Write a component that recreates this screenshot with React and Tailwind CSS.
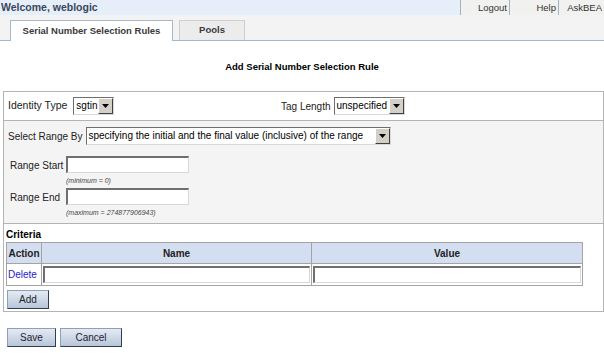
import React from 'react';

const inset =
  'border border-t-[#6f6f6f] border-l-[#6f6f6f] border-b-[#d8d8d8] border-r-[#d8d8d8] bg-white';

const Select = ({ value, width }) => (
  <div className={`flex h-[18px] items-stretch ${inset} ${width}`}>
    <span className="flex-1 overflow-hidden whitespace-nowrap px-[2px] text-[10px] leading-[16px] text-black">{value}</span>
    <span className="flex w-[15px] shrink-0 items-center justify-center border border-t-white border-l-white border-b-[#404040] border-r-[#404040] bg-[#d4d0c8]">
      <svg width="7" height="4" viewBox="0 0 7 4">
        <path d="M0 0h7L3.5 4z" fill="#000" />
      </svg>
    </span>
  </div>
);

const TextBox = ({ width }) => (
  <input type="text" className={`block h-[17px] ${inset} border-t-2 border-l-2 outline-none ${width}`} />
);

const Btn = ({ label, width }) => (
  <button className={`h-[19px] ${width} border border-t-[#8ea0b8] border-l-[#8ea0b8] border-b-[#2e3e56] border-r-[#2e3e56] bg-gradient-to-b from-[#e4eaf3] to-[#b9c6d9] text-[10px] leading-[17px] text-[#1c2433]`}>
    {label}
  </button>
);

export default function App() {
  return (
    <div className="h-[353px] w-[604px] overflow-hidden bg-white font-['Liberation_Sans',Arial,sans-serif] text-[#222]">
      {/* top bar */}
      <div className="flex h-[15px] bg-[#e6eefa]">
        <div className="flex-1 pl-[1px] text-[10.5px] font-bold leading-[15px] text-[#3a475a]">Welcome, weblogic</div>
        {['Logout', 'Help', 'AskBEA'].map((l, i) => (
          <div
            key={l}
            className={`border-l border-[#a3b3c6] bg-[#f1f1ef] pr-[2px] text-right text-[9.5px] leading-[15px] text-[#333] ${i === 2 ? 'w-[46px]' : 'w-[49px]'}`}
          >
            {l}
          </div>
        ))}
      </div>

      {/* tabs */}
      <div className="flex h-[26px] items-end gap-[6px] border-b border-[#a6b8cc] bg-[#f3f3f3] pl-[10px]">
        <div className="-mb-px flex h-[21px] w-[163px] items-center justify-center border border-b-0 border-[#a6b8cc] bg-white text-[9.5px] font-bold text-[#3a3a3a]">
          Serial Number Selection Rules
        </div>
        <div className="flex h-[20px] w-[66px] items-center justify-center border border-b-0 border-[#cfcfcf] bg-[#ececec] text-[9.5px] font-bold text-[#3a3a3a]">
          Pools
        </div>
      </div>

      <div className="pt-[20px] text-center text-[9.5px] font-bold leading-[12px] text-black">
        Add Serial Number Selection Rule
      </div>

      {/* form box */}
      <div className="ml-[3px] mt-[18px] w-[601px] border border-[#b4b4b4]">
        <div className="flex h-[29px] items-center border-b border-[#b4b4b4] pl-[4px] text-[10px]">
          <div className="flex w-[273px] items-center gap-[6px]">
            <span className="text-[10.5px]">Identity Type</span>
            <Select value="sgtin" width="w-[41px]" />
          </div>
          <div className="flex items-center gap-[3px]">
            <span>Tag Length</span>
            <Select value="unspecified" width="w-[71px]" />
          </div>
        </div>

        <div className="h-[103px] border-b border-[#b4b4b4] bg-[#f4f4f4] pl-[4px] pt-[6px] text-[10px]">
          <div className="flex items-center gap-[3px]">
            <span className="whitespace-nowrap">Select Range By</span>
            <Select value="specifying the initial and the final value (inclusive) of the range" width="w-[305px]" />
          </div>
          <div className="mt-[11px] flex pl-[2px]">
            <span className="w-[56px] whitespace-nowrap pt-[2px]">Range Start</span>
            <div>
              <TextBox width="w-[123px]" />
              <div className="mt-[3px] text-[7px] italic leading-[9px] text-[#444]">(minimum = 0)</div>
            </div>
          </div>
          <div className="mt-[3px] flex pl-[2px]">
            <span className="w-[56px] whitespace-nowrap pt-[2px]">Range End</span>
            <div>
              <TextBox width="w-[123px]" />
              <div className="mt-[3px] text-[7px] italic leading-[9px] text-[#444]">(maximum = 274877906943)</div>
            </div>
          </div>
        </div>

        <div className="h-[87px] pl-[2px] pt-[4px]">
          <div className="text-[10px] font-bold leading-[13px] text-black">Criteria</div>
          <table className="mt-[1px] w-[577px] border-collapse text-[10px]">
            <thead>
              <tr className="h-[21px] bg-[#d3def0]">
                <th className="w-[35px] border border-[#a4a4a4] font-bold">Action</th>
                <th className="w-[270px] border border-[#a4a4a4] font-bold">Name</th>
                <th className="border border-[#a4a4a4] font-bold">Value</th>
              </tr>
            </thead>
            <tbody>
              <tr className="h-[22px]">
                <td className="border border-[#a4a4a4] px-[1px] text-[10px] text-[#2424c8]">Delete</td>
                <td className="border border-[#a4a4a4] px-[1px]">
                  <TextBox width="w-full" />
                </td>
                <td className="border border-[#a4a4a4] px-[1px]">
                  <TextBox width="w-full" />
                </td>
              </tr>
            </tbody>
          </table>
          <div className="mt-[4px] flex pl-[1px]">
            <Btn label="Add" width="w-[42px]" />
          </div>
        </div>
      </div>

      <div className="ml-[7px] mt-[16px] flex gap-[4px]">
        <Btn label="Save" width="w-[49px]" />
        <Btn label="Cancel" width="w-[62px]" />
      </div>
    </div>
  );
}
